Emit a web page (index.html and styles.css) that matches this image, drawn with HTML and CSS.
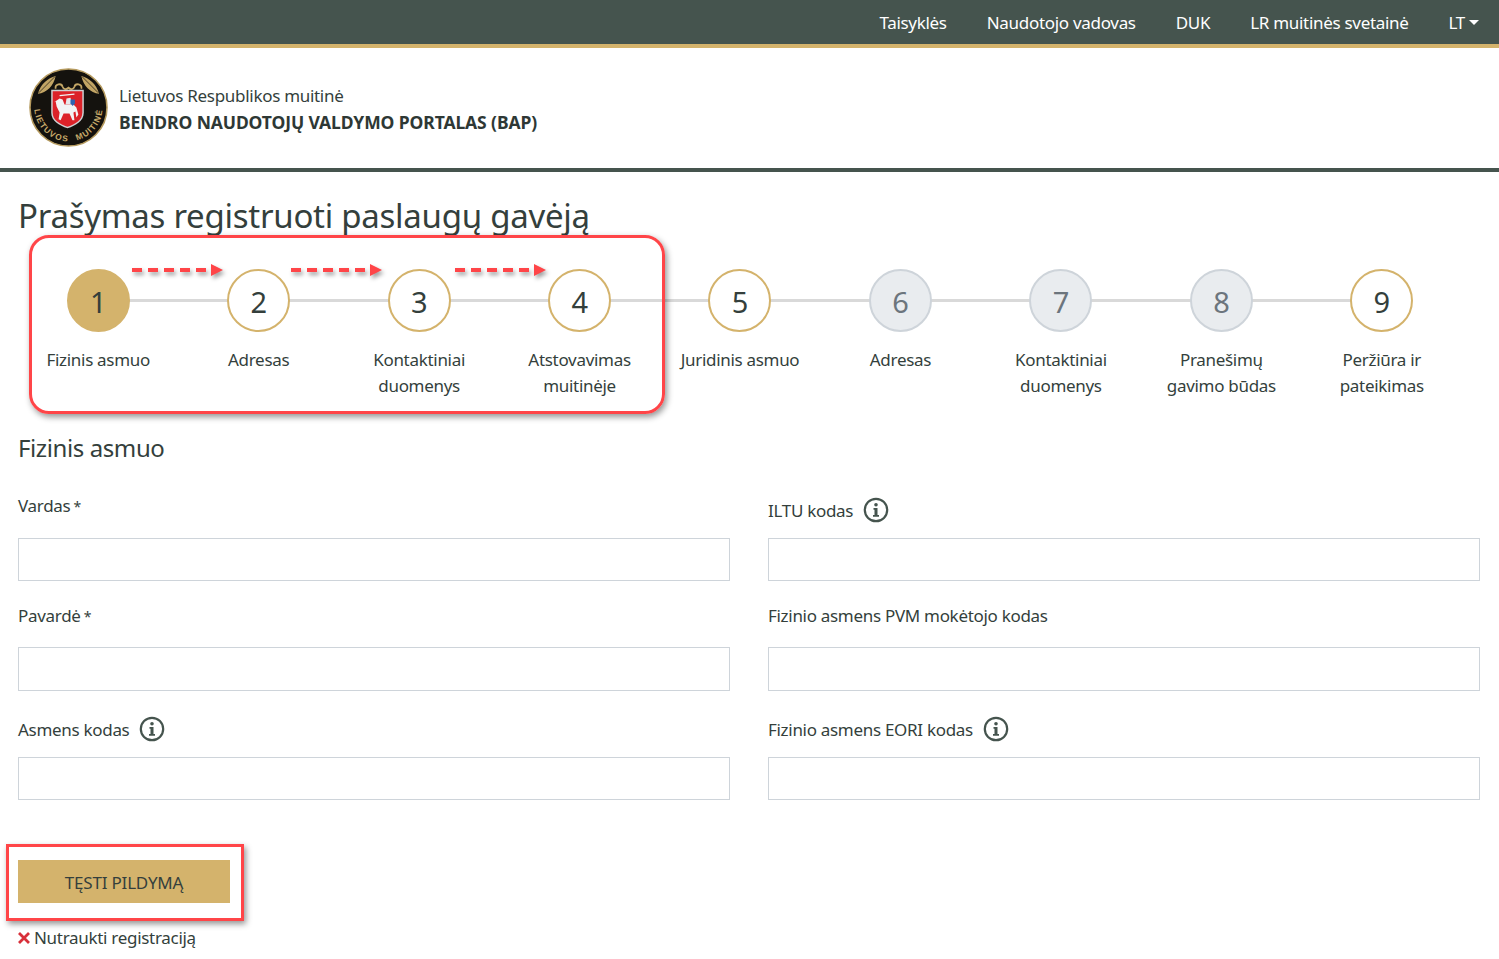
FILE: index.html
```html
<!DOCTYPE html>
<html lang="lt">
<head>
<meta charset="utf-8">
<title>Prašymas registruoti paslaugų gavėją</title>
<link rel="stylesheet" href="styles.css">
</head>
<body>
<nav class="topbar">
  <a class="topbar-link">Taisyklės</a>
  <a class="topbar-link">Naudotojo vadovas</a>
  <a class="topbar-link">DUK</a>
  <a class="topbar-link">LR muitinės svetainė</a>
  <a class="topbar-link topbar-lang">LT<span class="caret"></span></a>
</nav>
<header class="brand">
  <svg class="logo" viewBox="0 0 80 80" width="79" height="79">
    <defs>
      <path id="logo-arc" d="M6 34 A34.500 34.500 0 1 0 74 34"/>
    </defs>
    <circle cx="40" cy="40" r="39" fill="#14120e" stroke="#b59a5e" stroke-width="1.600"/>
    <path d="M27 8c-8 2-15 8-18 18 9-1 16-8 18-18zM53 8c8 2 15 8 18 18-9-1-16-8-18-18z" fill="#c2a565"/>
    <path d="M26 9L10 25M54 9l16 16" stroke="#14120e" stroke-width="0.700"/>
    <path d="M27 21c-1-5 6-6 7-2 1 3 4 3 6 1 2 2 5 2 6-1 1-4 8-3 7 2" fill="none" stroke="#c2a565" stroke-width="1.800"/>
    <path d="M22.500 22h33v23c0 9-8 13-16.500 16-8.500-3-16.500-7-16.500-16z" fill="#cfd2d4"/>
    <path d="M24 23.500h30v21.500c0 8-7 11.500-15 14.500-8-3-15-6.500-15-14.500z" fill="#dc2229"/>
    <path d="M28 33l3-2 3 1 2 5 9 0 3 3 2 7-2 3-1-6-2 1 1 8-2 0-3-7-6 0-3 7-2-1 1-7-3-6-1-5-2 1z" fill="#f2f3f4"/>
    <path d="M37 37l1-6 4-1 2 7z" fill="#e6e8ea"/>
    <path d="M31 28l15-1.500" stroke="#f2f3f4" stroke-width="1.200"/>
    <path d="M42 32h4.500v4l-2.250 2.500-2.250-2.500z" fill="#2f62b0"/>
    <text class="logo-text"><textPath href="#logo-arc" startOffset="50%" text-anchor="middle">LIETUVOS MUITINĖ</textPath></text>
  </svg>
  <div class="brand-text">
    <div class="brand-org">Lietuvos Respublikos muitinė</div>
    <div class="brand-title">BENDRO NAUDOTOJŲ VALDYMO PORTALAS (BAP)</div>
  </div>
</header>
<main class="page">
  <h1 class="page-title">Prašymas registruoti paslaugų gavėją</h1>
  <ol class="stepper">
    <li class="step step-active"><span class="step-dot">1</span><span class="step-label">Fizinis asmuo</span></li>
    <li class="step"><span class="step-dot">2</span><span class="step-label">Adresas</span></li>
    <li class="step"><span class="step-dot">3</span><span class="step-label">Kontaktiniai<br>duomenys</span></li>
    <li class="step"><span class="step-dot">4</span><span class="step-label">Atstovavimas<br>muitinėje</span></li>
    <li class="step"><span class="step-dot">5</span><span class="step-label">Juridinis asmuo</span></li>
    <li class="step step-off"><span class="step-dot">6</span><span class="step-label">Adresas</span></li>
    <li class="step step-off"><span class="step-dot">7</span><span class="step-label">Kontaktiniai<br>duomenys</span></li>
    <li class="step step-off"><span class="step-dot">8</span><span class="step-label">Pranešimų<br>gavimo būdas</span></li>
    <li class="step"><span class="step-dot">9</span><span class="step-label">Peržiūra ir<br>pateikimas</span></li>
  </ol>
  <h2 class="section-title">Fizinis asmuo</h2>
  <form class="form-grid">
    <div class="field field-1">
      <label class="field-label"><span>Vardas <span class="req">*</span></span></label>
      <input class="field-input" type="text">
    </div>
    <div class="field field-1">
      <label class="field-label field-label-icon">ILTU kodas
        <svg class="info" viewBox="0 0 26 26" width="26" height="26"><circle cx="13" cy="13" r="11.200" fill="none" stroke="#45544e" stroke-width="2.200"/><circle cx="13" cy="7.800" r="1.800" fill="#45544e"/><path d="M10.500 11h4v7h1.500v1.800h-6V18h1.500v-5.200h-1z" fill="#45544e"/></svg>
      </label>
      <input class="field-input" type="text">
    </div>
    <div class="field field-2">
      <label class="field-label"><span>Pavardė <span class="req">*</span></span></label>
      <input class="field-input" type="text">
    </div>
    <div class="field field-2">
      <label class="field-label">Fizinio asmens PVM mokėtojo kodas</label>
      <input class="field-input" type="text">
    </div>
    <div class="field field-3">
      <label class="field-label field-label-icon">Asmens kodas
        <svg class="info" viewBox="0 0 26 26" width="26" height="26"><circle cx="13" cy="13" r="11.200" fill="none" stroke="#45544e" stroke-width="2.200"/><circle cx="13" cy="7.800" r="1.800" fill="#45544e"/><path d="M10.500 11h4v7h1.500v1.800h-6V18h1.500v-5.200h-1z" fill="#45544e"/></svg>
      </label>
      <input class="field-input" type="text">
    </div>
    <div class="field field-3">
      <label class="field-label field-label-icon">Fizinio asmens EORI kodas
        <svg class="info" viewBox="0 0 26 26" width="26" height="26"><circle cx="13" cy="13" r="11.200" fill="none" stroke="#45544e" stroke-width="2.200"/><circle cx="13" cy="7.800" r="1.800" fill="#45544e"/><path d="M10.500 11h4v7h1.500v1.800h-6V18h1.500v-5.200h-1z" fill="#45544e"/></svg>
      </label>
      <input class="field-input" type="text">
    </div>
  </form>
  <button class="btn-next" type="button">TĘSTI PILDYMĄ</button>
  <a class="cancel"><svg class="cancel-x" viewBox="0 0 14 14" width="14" height="14"><path d="M2 2l10 10M12 2L2 12" stroke="#d8303a" stroke-width="2.800"/></svg>Nutraukti registraciją</a>
</main>
<div class="note note-steps"></div>
<div class="note note-button"></div>
<svg class="note-arrow arrow-1" viewBox="0 0 92 14" width="92" height="14"><path d="M0 7h78" stroke="#ff4548" stroke-width="4" stroke-dasharray="10 6"/><path d="M79 1L91 7 79 13z" fill="#ff4548"/></svg>
<svg class="note-arrow arrow-2" viewBox="0 0 92 14" width="92" height="14"><path d="M0 7h78" stroke="#ff4548" stroke-width="4" stroke-dasharray="10 6"/><path d="M79 1L91 7 79 13z" fill="#ff4548"/></svg>
<svg class="note-arrow arrow-3" viewBox="0 0 92 14" width="92" height="14"><path d="M0 7h78" stroke="#ff4548" stroke-width="4" stroke-dasharray="10 6"/><path d="M79 1L91 7 79 13z" fill="#ff4548"/></svg>
</body>
</html>
```
FILE: styles.css
```css
* { box-sizing: border-box; }
html, body { margin: 0; padding: 0; }
body {
  position: relative;
  height: 959px;
  overflow: hidden;
  background: #fff;
  color: #343f3c;
  font-family: "Noto Sans", "Open Sans", sans-serif;
  font-size: 17px;
  letter-spacing: -0.3px;
}
.topbar {
  height: 48px;
  background: #45544e;
  border-bottom: 4px solid #d4b36c;
  display: flex;
  justify-content: flex-end;
  align-items: center;
  gap: 40px;
  padding-right: 20px;
  color: #fff;
}
.topbar-link { color: #fff; white-space: nowrap; }
.topbar-lang { display: flex; align-items: center; gap: 5px; letter-spacing: -1.300px; }
.caret {
  width: 0;
  height: 0;
  border-left: 5px solid transparent;
  border-right: 5px solid transparent;
  border-top: 5px solid #fff;
}
.brand {
  height: 124px;
  border-bottom: 4px solid #45544e;
  display: flex;
  align-items: center;
  gap: 11px;
  padding-left: 29px;
  padding-bottom: 1px;
}
.logo { flex: none; }
.logo-text {
  font-family: "Liberation Sans", sans-serif;
  font-size: 8.500px;
  font-weight: 700;
  letter-spacing: 1.200px;
  word-spacing: 5px;
  fill: #c8ab6b;
}
.brand-text { display: flex; flex-direction: column; gap: 2px; line-height: 24px; margin-top: 2px; }
.brand-title { font-size: 17.500px; font-weight: 700; letter-spacing: -0.1px; color: #2e3835; }
.page { padding: 0 19px 0 18px; }
.page-title {
  margin: 0;
  padding-top: 22px;
  height: 98px;
  font-size: 33px;
  line-height: 44px;
  font-weight: 400;
  letter-spacing: -0.27px;
}
.stepper {
  list-style: none;
  margin: 0;
  padding: 0;
  width: 1444px;
  height: 160px;
  display: grid;
  grid-template-columns: repeat(9, 1fr);
}
.step {
  position: relative;
  display: flex;
  flex-direction: column;
  align-items: center;
  text-align: center;
}
.step::after {
  content: "";
  position: absolute;
  top: 29px;
  left: 50%;
  width: 100%;
  height: 3px;
  background: #d9d9d9;
}
.step:last-child::after { display: none; }
.step-dot {
  position: relative;
  z-index: 1;
  width: 63px;
  height: 63px;
  margin-top: -1px;
  padding-top: 2px;
  border: 2px solid #d4b36c;
  border-radius: 50%;
  background: #fff;
  display: flex;
  align-items: center;
  justify-content: center;
  font-size: 29px;
  line-height: 1;
}
.step-active .step-dot { background: #d4b36c; }
.step-off .step-dot { background: #e9ecef; border-color: #ced4da; color: #6c757d; }
.step-label { margin-top: 15px; line-height: 26px; white-space: nowrap; }
.section-title {
  margin: 0;
  height: 56px;
  font-size: 24px;
  line-height: 36px;
  font-weight: 400;
  letter-spacing: -0.4px;
}
.form-grid {
  width: 1462px;
  display: grid;
  grid-template-columns: 712px 712px;
  column-gap: 38px;
}
.field { display: flex; flex-direction: column; justify-content: flex-end; }
.field-1 { height: 95px; }
.field-2 { height: 110px; }
.field-3 { height: 109px; }
.field-label { display: flex; align-items: center; height: 26px; margin-bottom: 19px; }
.field-label-icon { gap: 10px; margin-bottom: 15px; }
.field-1 .field-label { margin-bottom: 20px; }
.field-1 .field-label-icon { margin-bottom: 15px; }
.req { font-size: 14px; margin-left: -1px; }
.field-input {
  display: block;
  width: 100%;
  height: 43px;
  border: 1px solid #ced4da;
  background: #fff;
  border-radius: 0;
  padding: 0 12px;
}
.field-2 .field-input { height: 44px; }
.info { flex: none; }
.btn-next {
  display: block;
  margin-top: 60px;
  width: 212px;
  height: 43px;
  padding: 2px 0 0;
  border: 0;
  border-radius: 0;
  background: #d4b36c;
  color: #343f3c;
  font: inherit;
  letter-spacing: -0.2px;
}
.cancel {
  display: flex;
  align-items: center;
  gap: 3px;
  margin-top: 22px;
  line-height: 26px;
  margin-left: -1px;
}
.cancel-x { flex: none; }
.note {
  position: absolute;
  border: 3.500px solid #ff4548;
  box-shadow: 2px 3px 6px rgba(0, 0, 0, 0.42);
}
.note-steps { left: 29px; top: 235px; width: 636px; height: 179px; border-radius: 20px; }
.note-button { left: 6px; top: 844px; width: 238px; height: 77px; }
.note-arrow {
  position: absolute;
  top: 263px;
  filter: drop-shadow(2px 3px 2px rgba(0, 0, 0, 0.38));
}
.arrow-1 { left: 132px; }
.arrow-2 { left: 291px; }
.arrow-3 { left: 455px; }
```
